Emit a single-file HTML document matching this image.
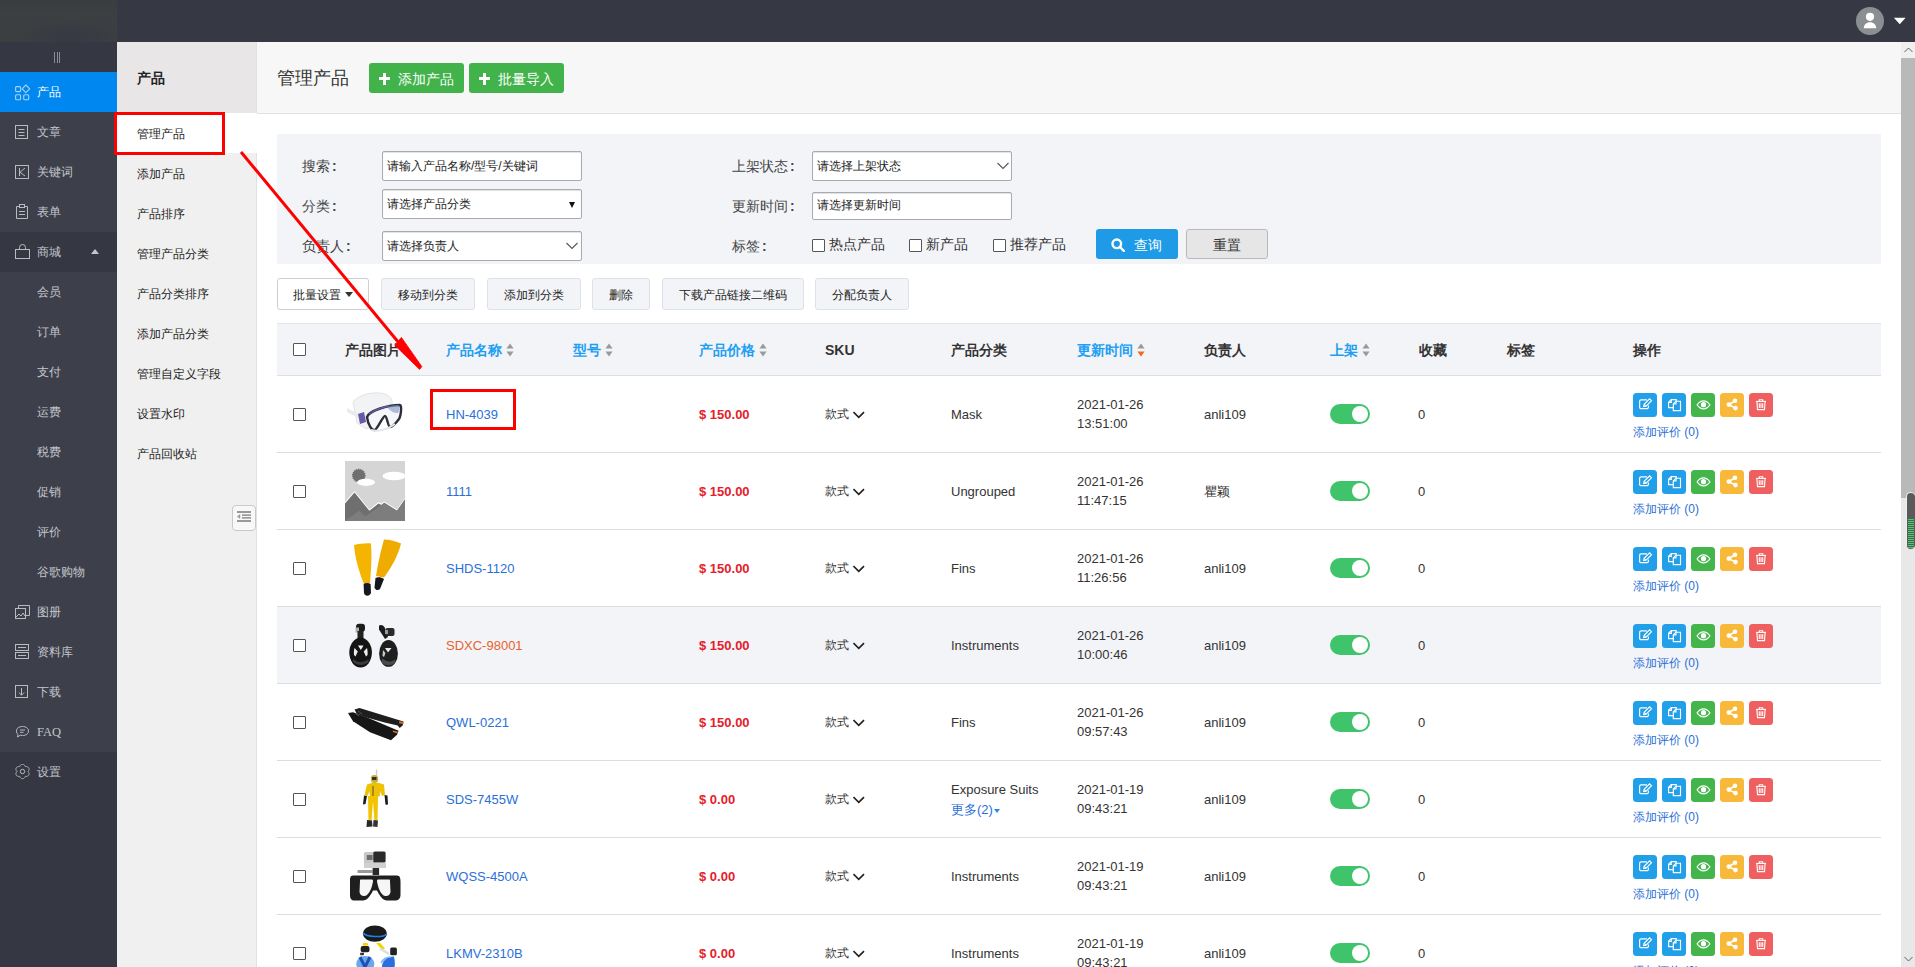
<!DOCTYPE html><html><head><meta charset="utf-8"><style>*{box-sizing:border-box;margin:0;padding:0}
html,body{width:1915px;height:967px;overflow:hidden}
body{position:relative;background:#fff;font-family:"Liberation Sans",sans-serif;font-size:13px;color:#333}
.abs{position:absolute}
#top{left:0;top:0;width:1915px;height:42px;background:#363943}
#logo{left:0;top:0;width:117px;height:42px;background:radial-gradient(ellipse 45px 14px at 68px 36px,#363943 0%,rgba(54,57,67,0.6) 50%,rgba(54,57,67,0) 100%),linear-gradient(180deg,#393d40 0%,#3c4043 40%,#3a3e41 100%)}
#side{left:0;top:42px;width:117px;height:925px;background:#353842}
#menu{left:0;top:112px;width:117px;height:640px;background:#3d404b}
.mi{position:absolute;left:0;width:117px;height:40px;color:#c4c6cc;font-size:12px;line-height:40px}
.mi .t{position:absolute;left:37px;top:0}
.mi svg{position:absolute;left:15px;top:12px}
.mi.act{background:#0088f0;color:#fff}
.mi.dk{background:#353842}
#sub{left:117px;top:42px;width:140px;height:925px;background:#f0f0f0;border-right:1px solid #dfe2e8}
#subh{left:117px;top:42px;width:140px;height:72px;background:#e8e6e6;border-right:1px solid #dfe2e8;border-bottom:1px solid #dfe2e8}
.si{position:absolute;left:137px;font-size:12px;color:#1c1c1c;line-height:40px;height:40px}
#hdr{left:257px;top:42px;width:1644px;height:72px;background:#f7f7f7;border-bottom:1px solid #dde2e8}
.gbtn{position:absolute;top:63px;height:30px;width:95px;background:#42b24a;border-radius:3px;color:#fff;font-size:14px;line-height:30px}
.gbtn .pl{position:absolute;left:9.5px;top:10px;width:11.5px;height:11.5px}
.gbtn .pl:before{content:"";position:absolute;left:0;top:4.25px;width:11.5px;height:3px;background:#fff}
.gbtn .pl:after{content:"";position:absolute;left:4.25px;top:0;width:3px;height:11.5px;background:#fff}
.gbtn .tx{position:absolute;left:29px;top:1px}
#panel{left:277px;top:134px;width:1604px;height:130px;background:#f3f4f8}
.lbl{position:absolute;font-size:14px;color:#454545;line-height:16px}
.inp{position:absolute;background:#fff;border:1px solid #a9a9b3;border-radius:2px;box-shadow:inset 0 1px 1px rgba(0,0,0,.12);font-size:12px;color:#222;line-height:28px;padding-left:4px}
.cb{position:absolute;width:13px;height:13px;border:1px solid #555;background:#fff;border-radius:1px}
.tb{position:absolute;top:278px;height:32px;background:#f3f4f8;border:1px solid #dde2ea;border-radius:3px;font-size:12px;color:#222;line-height:30px;padding-top:1px;text-align:center}
.th{position:absolute;left:277px;top:323px;width:1604px;height:53px;background:#f3f4f8;border-top:1px solid #e2e4e8;border-bottom:1px solid #dcdfe4}
.hc{position:absolute;top:342px;font-size:14px;font-weight:bold;color:#333;line-height:16px;white-space:nowrap}
.hc.bl{color:#1e9ff2}
.row{position:absolute;left:277px;width:1604px;height:77px;border-bottom:1px solid #dcdddf}
.row.hl{background:#f3f4f8}
.c{position:absolute;font-size:13px;line-height:19px;color:#333;white-space:nowrap}
.price{color:#e5202a;font-weight:bold}
.tog{position:absolute;width:40px;height:20px;border-radius:10px;background:#3fc46c}
.tog:after{content:"";position:absolute;right:2px;top:2px;width:16px;height:16px;border-radius:50%;background:#fff}
.ab{position:absolute;width:24px;height:24px;border-radius:3.5px}
.ab svg{position:absolute;left:0;top:0}
.rev{position:absolute;font-size:12px;color:#2b6fd8;line-height:14px;white-space:nowrap}
.col{display:inline-block;margin-left:2px;font-weight:bold}
</style></head><body><div id="top" class="abs"></div><div id="logo" class="abs"></div><div id="side" class="abs"></div><div id="menu" class="abs"></div><div class="abs" style="left:54px;top:52px;width:1px;height:11px;background:#8a8d94"></div><div class="abs" style="left:56.6px;top:52px;width:1px;height:11px;background:#8a8d94"></div><div class="abs" style="left:59.2px;top:52px;width:1px;height:11px;background:#8a8d94"></div><svg class="abs" style="left:1856px;top:7px" width="28" height="28" viewBox="0 0 28 28"><circle cx="14" cy="14" r="14" fill="#8c8f92"/><circle cx="14" cy="9.8" r="4.1" fill="#fff"/><path d="M7.8 21.3c0-3.8 2.8-6 6.2-6s6.2 2.2 6.2 6z" fill="#fff"/></svg><svg class="abs" style="left:1893px;top:17px" width="13" height="8" viewBox="0 0 13 8"><path d="M0.9 0.8h11.7L6.75 7.2z" fill="#fff"/></svg><div class="mi act" style="top:72px"><svg width="16" height="17" viewBox="0 0 16 17" fill="none" stroke="#a9d1f6" stroke-width="1.1"><rect x="0.6" y="2.6" width="5" height="5" rx="1"/><rect x="0.6" y="10.7" width="5" height="5" rx="1"/><rect x="8.7" y="10.7" width="5" height="5" rx="1"/><path d="M10.9 1L14.7 4.8L10.9 8.6L7.1 4.8Z" stroke-linejoin="round"/></svg><span class="t" style="left:37px">产品</span></div><div class="mi " style="top:112px"><svg width="16" height="16" viewBox="0 0 16 16" fill="none" stroke="#b9bbc1" stroke-width="1"><rect x="0.5" y="1.5" width="12" height="13"/><path d="M3.5 5.5h6M3.5 8.5h6M3.5 11.5h6"/></svg><span class="t" style="left:37px">文章</span></div><div class="mi " style="top:152px"><svg width="16" height="16" viewBox="0 0 16 16" fill="none" stroke="#b9bbc1" stroke-width="1"><rect x="0.5" y="1.5" width="13" height="13"/><path d="M4.5 4v8M10 4L5 8.3L10 12"/></svg><span class="t" style="left:37px">关键词</span></div><div class="mi " style="top:192px"><svg width="16" height="16" viewBox="0 0 16 16" fill="none" stroke="#b9bbc1" stroke-width="1"><path d="M4.5 2.5h-3v12h11v-12h-3"/><rect x="4.5" y="0.5" width="5" height="3"/><path d="M4 7.5h6M4 10.5h6"/></svg><span class="t" style="left:37px">表单</span></div><div class="mi dk" style="top:232px"><svg width="16" height="16" viewBox="0 0 16 16" fill="none" stroke="#b9bbc1" stroke-width="1"><rect x="0.5" y="5.5" width="14" height="9"/><path d="M4.5 5.5v-2a3 3 0 0 1 6 0v2"/></svg><span class="t" style="left:37px">商城</span><div class="abs" style="left:91px;top:17px;width:0;height:0;border-left:4.5px solid transparent;border-right:4.5px solid transparent;border-bottom:5px solid #c4c6cc"></div></div><div class="mi " style="top:272px"><span class="t" style="left:37px">会员</span></div><div class="mi " style="top:312px"><span class="t" style="left:37px">订单</span></div><div class="mi " style="top:352px"><span class="t" style="left:37px">支付</span></div><div class="mi " style="top:392px"><span class="t" style="left:37px">运费</span></div><div class="mi " style="top:432px"><span class="t" style="left:37px">税费</span></div><div class="mi " style="top:472px"><span class="t" style="left:37px">促销</span></div><div class="mi " style="top:512px"><span class="t" style="left:37px">评价</span></div><div class="mi " style="top:552px"><span class="t" style="left:37px">谷歌购物</span></div><div class="mi " style="top:592px"><svg width="16" height="16" viewBox="0 0 16 16" fill="none" stroke="#b9bbc1" stroke-width="1"><rect x="0.5" y="4.5" width="10" height="10"/><path d="M3.5 4.5v-3h11v10h-4"/><path d="M1 13l3-3 2 2 2-3 2 3"/></svg><span class="t" style="left:37px">图册</span></div><div class="mi " style="top:632px"><svg width="16" height="16" viewBox="0 0 16 16" fill="none" stroke="#b9bbc1" stroke-width="1"><rect x="0.5" y="0.5" width="13" height="6"/><rect x="0.5" y="8.5" width="13" height="6"/><path d="M3 3.5h8M3 11.5h8"/></svg><span class="t" style="left:37px">资料库</span></div><div class="mi " style="top:672px"><svg width="16" height="16" viewBox="0 0 16 16" fill="none" stroke="#b9bbc1" stroke-width="1"><rect x="0.5" y="1.5" width="12" height="12"/><path d="M6.5 4v7M3.8 8.5l2.7 2.7 2.7-2.7"/></svg><span class="t" style="left:37px">下载</span></div><div class="mi " style="top:712px"><svg width="16" height="16" viewBox="0 0 16 16" fill="none" stroke="#b9bbc1" stroke-width="1"><path d="M7.5 2.5c3.6 0 6 1.9 6 4.5s-2.4 4.5-6 4.5c-.8 0-1.5-.1-2.2-.3L2.5 13l.6-2.6C1.8 9.6 1.5 8.3 1.5 7c0-2.6 2.4-4.5 6-4.5z"/><path d="M5 6h5M5 8.3h3.5"/></svg><span class="t" style="left:37px;font-family:Liberation Serif;font-size:12.5px">FAQ</span></div><div class="mi dk" style="top:752px"><svg width="16" height="16" viewBox="0 0 16 16" fill="none" stroke="#b9bbc1" stroke-width="1"><path d="M7.50 0.30 L7.81 0.32 L8.12 0.38 L8.42 0.48 L8.71 0.62 L8.99 0.79 L9.24 1.00 L9.48 1.23 L9.69 1.49 L9.88 1.76 L10.04 2.05 L10.18 2.35 L10.30 2.65 L10.62 2.60 L10.95 2.57 L11.28 2.57 L11.61 2.60 L11.94 2.65 L12.26 2.74 L12.56 2.86 L12.85 3.01 L13.12 3.19 L13.35 3.40 L13.56 3.64 L13.74 3.90 L13.87 4.18 L13.98 4.48 L14.04 4.79 L14.06 5.11 L14.05 5.43 L14.00 5.76 L13.92 6.08 L13.80 6.39 L13.66 6.69 L13.49 6.98 L13.30 7.25 L13.10 7.50 L13.30 7.75 L13.49 8.02 L13.66 8.31 L13.80 8.61 L13.92 8.92 L14.00 9.24 L14.05 9.57 L14.06 9.89 L14.04 10.21 L13.98 10.52 L13.87 10.82 L13.74 11.10 L13.56 11.36 L13.35 11.60 L13.12 11.81 L12.85 11.99 L12.56 12.14 L12.26 12.26 L11.94 12.35 L11.61 12.40 L11.28 12.43 L10.95 12.43 L10.62 12.40 L10.30 12.35 L10.18 12.65 L10.04 12.95 L9.88 13.24 L9.69 13.51 L9.48 13.77 L9.24 14.00 L8.99 14.21 L8.71 14.38 L8.42 14.52 L8.12 14.62 L7.81 14.68 L7.50 14.70 L7.19 14.68 L6.88 14.62 L6.58 14.52 L6.29 14.38 L6.01 14.21 L5.76 14.00 L5.52 13.77 L5.31 13.51 L5.12 13.24 L4.96 12.95 L4.82 12.65 L4.70 12.35 L4.38 12.40 L4.05 12.43 L3.72 12.43 L3.39 12.40 L3.06 12.35 L2.74 12.26 L2.44 12.14 L2.15 11.99 L1.88 11.81 L1.65 11.60 L1.44 11.36 L1.26 11.10 L1.13 10.82 L1.02 10.52 L0.96 10.21 L0.94 9.89 L0.95 9.57 L1.00 9.24 L1.08 8.92 L1.20 8.61 L1.34 8.31 L1.51 8.02 L1.70 7.75 L1.90 7.50 L1.70 7.25 L1.51 6.98 L1.34 6.69 L1.20 6.39 L1.08 6.08 L1.00 5.76 L0.95 5.43 L0.94 5.11 L0.96 4.79 L1.02 4.48 L1.13 4.18 L1.26 3.90 L1.44 3.64 L1.65 3.40 L1.88 3.19 L2.15 3.01 L2.44 2.86 L2.74 2.74 L3.06 2.65 L3.39 2.60 L3.72 2.57 L4.05 2.57 L4.38 2.60 L4.70 2.65 L4.82 2.35 L4.96 2.05 L5.12 1.76 L5.31 1.49 L5.52 1.23 L5.76 1.00 L6.01 0.79 L6.29 0.62 L6.58 0.48 L6.88 0.38 L7.19 0.32Z"/><circle cx="7.5" cy="7.5" r="2.2"/></svg><span class="t" style="left:37px">设置</span></div><div id="sub" class="abs"></div><div id="subh" class="abs"></div><div class="abs" style="left:137px;top:70px;font-size:14px;font-weight:bold;color:#222;line-height:16px">产品</div><div class="abs" style="left:117px;top:113px;width:141px;height:40px;background:#fff"></div><div class="si" style="top:114px">管理产品</div><div class="si" style="top:154px">添加产品</div><div class="si" style="top:194px">产品排序</div><div class="si" style="top:234px">管理产品分类</div><div class="si" style="top:274px">产品分类排序</div><div class="si" style="top:314px">添加产品分类</div><div class="si" style="top:354px">管理自定义字段</div><div class="si" style="top:394px">设置水印</div><div class="si" style="top:434px">产品回收站</div><div class="abs" style="left:232px;top:505px;width:24px;height:26px;background:#f8f8f8;border:1px solid #c9c9c9;border-radius:4px"></div><svg class="abs" style="left:232px;top:505px" width="24" height="26" viewBox="0 0 24 26"><rect x="5" y="6" width="14" height="2" fill="#9a9a9a"/><rect x="10" y="9.3" width="9" height="1.7" fill="#9a9a9a"/><rect x="10" y="12" width="9" height="1.7" fill="#9a9a9a"/><rect x="5" y="15" width="14" height="2" fill="#9a9a9a"/><path d="M8.2 9v5L5 11.5z" fill="#9a9a9a"/></svg><div id="hdr" class="abs"></div><div class="abs" style="left:277px;top:67px;font-size:18px;color:#333;line-height:22px">管理产品</div><div class="gbtn" style="left:369px"><span class="pl"></span><span class="tx">添加产品</span></div><div class="gbtn" style="left:469px"><span class="pl"></span><span class="tx">批量导入</span></div><div id="panel" class="abs"></div><div class="lbl" style="left:302px;top:158px">搜索<span class="col">:</span></div><div class="lbl" style="left:302px;top:198px">分类<span class="col">:</span></div><div class="lbl" style="left:302px;top:238px">负责人<span class="col">:</span></div><div class="inp" style="left:382px;top:151px;width:200px;height:30px">请输入产品名称/型号/关键词</div><div class="inp" style="left:382px;top:189px;width:200px;height:30px">请选择产品分类<div class="abs" style="left:186px;top:12px;width:0;height:0;border-left:3.5px solid transparent;border-right:3.5px solid transparent;border-top:6px solid #111"></div></div><div class="inp" style="left:382px;top:231px;width:200px;height:30px">请选择负责人<svg class="abs" style="left:183px;top:10px" width="12" height="8" viewBox="0 0 12 8" fill="none" stroke="#555" stroke-width="1.1"><path d="M0.5 1l5.5 5.5L11.5 1"/></svg></div><div class="lbl" style="left:732px;top:158px">上架状态<span class="col">:</span></div><div class="lbl" style="left:732px;top:198px">更新时间<span class="col">:</span></div><div class="lbl" style="left:732px;top:238px">标签<span class="col">:</span></div><div class="inp" style="left:812px;top:151px;width:200px;height:30px">请选择上架状态<svg class="abs" style="left:184px;top:10px" width="12" height="8" viewBox="0 0 12 8" fill="none" stroke="#555" stroke-width="1.1"><path d="M0.5 1l5.5 5.5L11.5 1"/></svg></div><div class="inp" style="left:812px;top:192px;width:200px;height:28px;line-height:25px">请选择更新时间</div><div class="cb" style="left:812px;top:239px"></div><div class="lbl" style="left:829px;top:236px;color:#333;font-size:14px">热点产品</div><div class="cb" style="left:909px;top:239px"></div><div class="lbl" style="left:926px;top:236px;color:#333;font-size:14px">新产品</div><div class="cb" style="left:993px;top:239px"></div><div class="lbl" style="left:1010px;top:236px;color:#333;font-size:14px">推荐产品</div><div class="abs" style="left:1096px;top:229px;width:82px;height:30px;background:#1f9ae6;border-radius:3px;color:#fff;font-size:14px;line-height:30px"><svg class="abs" style="left:15px;top:9px" width="14" height="14" viewBox="0 0 14 14" fill="none" stroke="#fff" stroke-width="2.4"><circle cx="5.8" cy="5.8" r="4.3"/><path d="M9 9l3.8 3.8" stroke-linecap="round"/></svg><span class="abs" style="left:38px;top:1px">查询</span></div><div class="abs" style="left:1186px;top:229px;width:82px;height:30px;background:#e6e6e6;border:1px solid #b9b9b9;border-radius:3px;color:#333;font-size:14px;line-height:30px;text-align:center">重置</div><div class="tb" style="left:277px;width:92px;background:#fff;border-color:#cfcfcf">批量设置 <span style="display:inline-block;width:0;height:0;border-left:4px solid transparent;border-right:4px solid transparent;border-top:5px solid #333;vertical-align:2px"></span></div><div class="tb" style="left:381px;width:94px">移动到分类</div><div class="tb" style="left:487px;width:94px">添加到分类</div><div class="tb" style="left:592px;width:58px">删除</div><div class="tb" style="left:662px;width:142px">下载产品链接二维码</div><div class="tb" style="left:815px;width:94px">分配负责人</div><div class="th"></div><div class="cb" style="left:293px;top:343px"></div><div class="hc" style="left:345px">产品图片</div><div class="hc bl" style="left:446px">产品名称<svg style="display:inline-block;vertical-align:-2px;margin-left:4px" width="8" height="14" viewBox="0 0 8 14"><path d="M4 0.6L7.6 5.4H0.4z" fill="#9a9a9a"/><path d="M4 13.4L7.6 8.6H0.4z" fill="#9a9a9a"/></svg></div><div class="hc bl" style="left:573px">型号<svg style="display:inline-block;vertical-align:-2px;margin-left:4px" width="8" height="14" viewBox="0 0 8 14"><path d="M4 0.6L7.6 5.4H0.4z" fill="#9a9a9a"/><path d="M4 13.4L7.6 8.6H0.4z" fill="#9a9a9a"/></svg></div><div class="hc bl" style="left:699px">产品价格<svg style="display:inline-block;vertical-align:-2px;margin-left:4px" width="8" height="14" viewBox="0 0 8 14"><path d="M4 0.6L7.6 5.4H0.4z" fill="#9a9a9a"/><path d="M4 13.4L7.6 8.6H0.4z" fill="#9a9a9a"/></svg></div><div class="hc" style="left:825px">SKU</div><div class="hc" style="left:951px">产品分类</div><div class="hc bl" style="left:1077px">更新时间<svg style="display:inline-block;vertical-align:-2px;margin-left:4px" width="8" height="14" viewBox="0 0 8 14"><path d="M4 0.6L7.6 5.4H0.4z" fill="#9a9a9a"/><path d="M4 13.4L7.6 8.6H0.4z" fill="#f06a1c"/></svg></div><div class="hc" style="left:1204px">负责人</div><div class="hc bl" style="left:1330px">上架<svg style="display:inline-block;vertical-align:-2px;margin-left:4px" width="8" height="14" viewBox="0 0 8 14"><path d="M4 0.6L7.6 5.4H0.4z" fill="#9a9a9a"/><path d="M4 13.4L7.6 8.6H0.4z" fill="#9a9a9a"/></svg></div><div class="hc" style="left:1419px">收藏</div><div class="hc" style="left:1507px">标签</div><div class="hc" style="left:1633px">操作</div><div class="row" style="top:376px"></div><div class="cb" style="left:293px;top:408px"></div><div class="abs" style="left:345px;top:384px;width:60px;height:60px"><svg width="60" height="60" viewBox="0 0 60 60"><path d="M8 18c6-8 22-11 32-8 6 2 8 7 7 11l-16 20-10 4-9-6z" fill="#f1f3f5" stroke="#e2e5e8" stroke-width="1"/><path d="M2 24l12 6-1 4-11-6z" fill="#e9ecef"/><path d="M13 30l6-2 2 10-6 2z" fill="#6a58aa"/><path d="M22 33c2-6 20-12 33-12 2 0 1 11-1 14-3 4-6 8-9 8-2 0-3-11-5-11s-7 12-10 14c-3 1-7-5-8-13z" fill="#f4f6fa" stroke="#2c2f3a" stroke-width="2.4" stroke-linejoin="round"/><path d="M42 23c5-2 10-2 12-2 1 3 0 7-1 8-4 0-7-1-11-6z" fill="#7d93c7" opacity=".6"/><path d="M24 30c6-4 14-7 20-8" stroke="#6a58aa" stroke-width="1.5" fill="none"/><path d="M26 46c6 2 16 0 24-6" stroke="#e4e7ea" stroke-width="2" fill="none"/></svg></div><div class="c" style="left:446px;top:405px;color:#2b6fd8">HN-4039</div><div class="c price" style="left:699px;top:405px">$ 150.00</div><div class="c" style="left:825px;top:405px;font-size:12px">款式</div><svg class="abs" style="left:853px;top:411px" width="11.5" height="8" viewBox="0 0 12 8" fill="none" stroke="#222" stroke-width="1.7"><path d="M0.5 1l5.5 5.5L11.5 1"/></svg><div class="c" style="left:951px;top:405px">Mask</div><div class="c" style="left:1077px;top:395px">2021-01-26<br>13:51:00</div><div class="c" style="left:1204px;top:405px">anli109</div><div class="tog" style="left:1330px;top:404px"></div><div class="c" style="left:1418px;top:405px">0</div><div class="ab" style="left:1633px;top:393px;background:#219fe9"><svg width="24" height="24" viewBox="0 0 24 24" fill="none" stroke="#fff" stroke-width="1.2"><path d="M14 6.9H8.1a1.5 1.5 0 0 0-1.5 1.5v5.8a1.5 1.5 0 0 0 1.5 1.5h5.8a1.5 1.5 0 0 0 1.5-1.5v-1.6"/><path d="M10.6 13.6l.5-2.3 5.5-5.5 1.9 1.9-5.5 5.5z" stroke-width="1.1"/><path d="M11.2 11.4l1.9 1.9"/></svg></div><div class="ab" style="left:1662px;top:393px;background:#219fe9"><svg width="24" height="24" viewBox="0 0 24 24" fill="none" stroke="#fff" stroke-width="1.15"><path d="M11.3 14.6H6.6V9.3L9.3 6.6h4.9v2"/><path d="M9.3 6.6v2.7H6.6"/><path d="M11.3 10.9L14 8.2h4.5v9.4h-7.2z"/><path d="M14 8.2v2.7h-2.7"/></svg></div><div class="ab" style="left:1691px;top:393px;background:#43b54b"><svg width="24" height="24" viewBox="0 0 24 24"><path d="M6.1 11.9c1.8-2.6 4-4 6.4-4s4.6 1.4 6.4 4c-1.8 2.6-4 4-6.4 4s-4.6-1.4-6.4-4z" fill="none" stroke="#fff" stroke-width="1.1"/><circle cx="12.5" cy="11.7" r="2.6" fill="#fff"/></svg></div><div class="ab" style="left:1720px;top:393px;background:#f8b93b"><svg width="24" height="24" viewBox="0 0 24 24"><path d="M15 7.8L8.9 11.6l6.6 3.5" stroke="#fff" stroke-width="1.6" fill="none"/><circle cx="15" cy="7.8" r="2.3" fill="#fff"/><circle cx="15.5" cy="15.1" r="2.3" fill="#fff"/><circle cx="8.9" cy="11.6" r="2.4" fill="#fff"/></svg></div><div class="ab" style="left:1749px;top:393px;background:#ef5f5f"><svg width="24" height="24" viewBox="0 0 24 24" fill="none" stroke="#fff" stroke-width="1.1"><path d="M7.1 8.4h9.9"/><path d="M10.3 8.2V6.8h3.4v1.4"/><path d="M7.9 8.6l.6 8h7l.6-8"/><path d="M10.3 10.3v4.6M12 10.3v4.6M13.7 10.3v4.6"/></svg></div><div class="rev" style="left:1633px;top:425px">添加评价 (0)</div><div class="row" style="top:453px"></div><div class="cb" style="left:293px;top:485px"></div><div class="abs" style="left:345px;top:461px;width:60px;height:60px"><svg width="60" height="60" viewBox="0 0 60 60"><rect width="60" height="60" fill="#d5d5d5"/><path d="M0 41L9.5 30 24.4 48.4 33.5 41 36.4 42.5 39.3 40.4 52 48.4 60 36.7V60H0z" fill="#ffffff"/><path d="M0 42.5L9.5 31.5 24.4 49.8 33.5 42.5 36.4 44 39.3 41.8 52 49.8 60 38.2V60H0z" fill="#6f6f6f"/><path d="M0 60L14.2 49.5 20.4 55.6 39.3 41.8 52 49.8 60 38.2V60z" fill="#7d7d7d"/><circle cx="13.8" cy="14.5" r="6.3" fill="#6f6f6f" stroke="#6f6f6f" stroke-width="1.2" stroke-dasharray="1 1"/><ellipse cx="21" cy="21.3" rx="9" ry="3.6" fill="#fff"/><ellipse cx="49" cy="15" rx="11.5" ry="4.3" fill="#fff"/></svg></div><div class="c" style="left:446px;top:482px;color:#2b6fd8">1111</div><div class="c price" style="left:699px;top:482px">$ 150.00</div><div class="c" style="left:825px;top:482px;font-size:12px">款式</div><svg class="abs" style="left:853px;top:488px" width="11.5" height="8" viewBox="0 0 12 8" fill="none" stroke="#222" stroke-width="1.7"><path d="M0.5 1l5.5 5.5L11.5 1"/></svg><div class="c" style="left:951px;top:482px">Ungrouped</div><div class="c" style="left:1077px;top:472px">2021-01-26<br>11:47:15</div><div class="c" style="left:1204px;top:482px">瞿颖</div><div class="tog" style="left:1330px;top:481px"></div><div class="c" style="left:1418px;top:482px">0</div><div class="ab" style="left:1633px;top:470px;background:#219fe9"><svg width="24" height="24" viewBox="0 0 24 24" fill="none" stroke="#fff" stroke-width="1.2"><path d="M14 6.9H8.1a1.5 1.5 0 0 0-1.5 1.5v5.8a1.5 1.5 0 0 0 1.5 1.5h5.8a1.5 1.5 0 0 0 1.5-1.5v-1.6"/><path d="M10.6 13.6l.5-2.3 5.5-5.5 1.9 1.9-5.5 5.5z" stroke-width="1.1"/><path d="M11.2 11.4l1.9 1.9"/></svg></div><div class="ab" style="left:1662px;top:470px;background:#219fe9"><svg width="24" height="24" viewBox="0 0 24 24" fill="none" stroke="#fff" stroke-width="1.15"><path d="M11.3 14.6H6.6V9.3L9.3 6.6h4.9v2"/><path d="M9.3 6.6v2.7H6.6"/><path d="M11.3 10.9L14 8.2h4.5v9.4h-7.2z"/><path d="M14 8.2v2.7h-2.7"/></svg></div><div class="ab" style="left:1691px;top:470px;background:#43b54b"><svg width="24" height="24" viewBox="0 0 24 24"><path d="M6.1 11.9c1.8-2.6 4-4 6.4-4s4.6 1.4 6.4 4c-1.8 2.6-4 4-6.4 4s-4.6-1.4-6.4-4z" fill="none" stroke="#fff" stroke-width="1.1"/><circle cx="12.5" cy="11.7" r="2.6" fill="#fff"/></svg></div><div class="ab" style="left:1720px;top:470px;background:#f8b93b"><svg width="24" height="24" viewBox="0 0 24 24"><path d="M15 7.8L8.9 11.6l6.6 3.5" stroke="#fff" stroke-width="1.6" fill="none"/><circle cx="15" cy="7.8" r="2.3" fill="#fff"/><circle cx="15.5" cy="15.1" r="2.3" fill="#fff"/><circle cx="8.9" cy="11.6" r="2.4" fill="#fff"/></svg></div><div class="ab" style="left:1749px;top:470px;background:#ef5f5f"><svg width="24" height="24" viewBox="0 0 24 24" fill="none" stroke="#fff" stroke-width="1.1"><path d="M7.1 8.4h9.9"/><path d="M10.3 8.2V6.8h3.4v1.4"/><path d="M7.9 8.6l.6 8h7l.6-8"/><path d="M10.3 10.3v4.6M12 10.3v4.6M13.7 10.3v4.6"/></svg></div><div class="rev" style="left:1633px;top:502px">添加评价 (0)</div><div class="row" style="top:530px"></div><div class="cb" style="left:293px;top:562px"></div><div class="abs" style="left:345px;top:538px;width:60px;height:60px"><svg width="60" height="60" viewBox="0 0 60 60"><path d="M9 7c5-1 11-2 17-1.5 1 12 0 28-1 39.5l-6 1C14 34 10 20 9 7z" fill="#f5b400"/><path d="M39 1.5c6 0 12 2 17 4C53 18 46 30 39 39.5l-8-1.5C33 25 36 12 39 1.5z" fill="#f0ab00"/><path d="M18.6 46c2-1.5 5-1.5 7 0l.4 9c-1 3-6 4-7 0z" fill="#15181e"/><path d="M30.5 40c2-1.5 6-1 8.5 1l-4 10c-2 2-5 1-5.5-1.5z" fill="#15181e"/></svg></div><div class="c" style="left:446px;top:559px;color:#2b6fd8">SHDS-1120</div><div class="c price" style="left:699px;top:559px">$ 150.00</div><div class="c" style="left:825px;top:559px;font-size:12px">款式</div><svg class="abs" style="left:853px;top:565px" width="11.5" height="8" viewBox="0 0 12 8" fill="none" stroke="#222" stroke-width="1.7"><path d="M0.5 1l5.5 5.5L11.5 1"/></svg><div class="c" style="left:951px;top:559px">Fins</div><div class="c" style="left:1077px;top:549px">2021-01-26<br>11:26:56</div><div class="c" style="left:1204px;top:559px">anli109</div><div class="tog" style="left:1330px;top:558px"></div><div class="c" style="left:1418px;top:559px">0</div><div class="ab" style="left:1633px;top:547px;background:#219fe9"><svg width="24" height="24" viewBox="0 0 24 24" fill="none" stroke="#fff" stroke-width="1.2"><path d="M14 6.9H8.1a1.5 1.5 0 0 0-1.5 1.5v5.8a1.5 1.5 0 0 0 1.5 1.5h5.8a1.5 1.5 0 0 0 1.5-1.5v-1.6"/><path d="M10.6 13.6l.5-2.3 5.5-5.5 1.9 1.9-5.5 5.5z" stroke-width="1.1"/><path d="M11.2 11.4l1.9 1.9"/></svg></div><div class="ab" style="left:1662px;top:547px;background:#219fe9"><svg width="24" height="24" viewBox="0 0 24 24" fill="none" stroke="#fff" stroke-width="1.15"><path d="M11.3 14.6H6.6V9.3L9.3 6.6h4.9v2"/><path d="M9.3 6.6v2.7H6.6"/><path d="M11.3 10.9L14 8.2h4.5v9.4h-7.2z"/><path d="M14 8.2v2.7h-2.7"/></svg></div><div class="ab" style="left:1691px;top:547px;background:#43b54b"><svg width="24" height="24" viewBox="0 0 24 24"><path d="M6.1 11.9c1.8-2.6 4-4 6.4-4s4.6 1.4 6.4 4c-1.8 2.6-4 4-6.4 4s-4.6-1.4-6.4-4z" fill="none" stroke="#fff" stroke-width="1.1"/><circle cx="12.5" cy="11.7" r="2.6" fill="#fff"/></svg></div><div class="ab" style="left:1720px;top:547px;background:#f8b93b"><svg width="24" height="24" viewBox="0 0 24 24"><path d="M15 7.8L8.9 11.6l6.6 3.5" stroke="#fff" stroke-width="1.6" fill="none"/><circle cx="15" cy="7.8" r="2.3" fill="#fff"/><circle cx="15.5" cy="15.1" r="2.3" fill="#fff"/><circle cx="8.9" cy="11.6" r="2.4" fill="#fff"/></svg></div><div class="ab" style="left:1749px;top:547px;background:#ef5f5f"><svg width="24" height="24" viewBox="0 0 24 24" fill="none" stroke="#fff" stroke-width="1.1"><path d="M7.1 8.4h9.9"/><path d="M10.3 8.2V6.8h3.4v1.4"/><path d="M7.9 8.6l.6 8h7l.6-8"/><path d="M10.3 10.3v4.6M12 10.3v4.6M13.7 10.3v4.6"/></svg></div><div class="rev" style="left:1633px;top:579px">添加评价 (0)</div><div class="row hl" style="top:607px"></div><div class="cb" style="left:293px;top:639px"></div><div class="abs" style="left:345px;top:615px;width:60px;height:60px"><svg width="60" height="60" viewBox="0 0 60 60"><rect x="11" y="8.7" width="9" height="8" rx="3" fill="#1c1c1c"/><rect x="10.5" y="12.5" width="3.5" height="5" fill="#b0b0a8"/><rect x="12.5" y="16" width="6" height="8" fill="#222"/><ellipse cx="15.6" cy="37.6" rx="11.3" ry="14.9" fill="#141414"/><path d="M13 30.5h5.5l-2.7 4.5z" fill="#f4f4f4"/><path d="M9.5 33l3.3 3.5-2.3 5-1.5-1.5c-.3-2.5 0-5 .5-7z" fill="#eee"/><path d="M22 33l-3.3 3.5 2.3 5 1.5-1.5c.3-2.5 0-5-.5-7z" fill="#eee"/><path d="M8 44c4 4 11 4 15.5 0v3c-4 4-11 4-15.5 0z" fill="#3a3a3a"/><path d="M34 10.5c3-1.5 5 .5 6 2.5l3 9-3 2-6-9.5z" fill="#1a1a1a"/><rect x="40.5" y="13" width="9" height="8" rx="2" fill="#2a2a2a"/><rect x="40" y="15" width="3" height="4" fill="#999"/><ellipse cx="43.5" cy="38.4" rx="9.4" ry="13.4" fill="#1e1e1e"/><path d="M40 33l3 4.5 3.5-4.5z" fill="#e8e8e8"/><path d="M38 35l2.5 3-1.5 4-1.5-1z" fill="#ccc"/><path d="M37 43c3 4 10 5 13 1v4c-3 3-10 3-13 0z" fill="#4a4a4a"/></svg></div><div class="c" style="left:446px;top:636px;color:#e8632f">SDXC-98001</div><div class="c price" style="left:699px;top:636px">$ 150.00</div><div class="c" style="left:825px;top:636px;font-size:12px">款式</div><svg class="abs" style="left:853px;top:642px" width="11.5" height="8" viewBox="0 0 12 8" fill="none" stroke="#222" stroke-width="1.7"><path d="M0.5 1l5.5 5.5L11.5 1"/></svg><div class="c" style="left:951px;top:636px">Instruments</div><div class="c" style="left:1077px;top:626px">2021-01-26<br>10:00:46</div><div class="c" style="left:1204px;top:636px">anli109</div><div class="tog" style="left:1330px;top:635px"></div><div class="c" style="left:1418px;top:636px">0</div><div class="ab" style="left:1633px;top:624px;background:#219fe9"><svg width="24" height="24" viewBox="0 0 24 24" fill="none" stroke="#fff" stroke-width="1.2"><path d="M14 6.9H8.1a1.5 1.5 0 0 0-1.5 1.5v5.8a1.5 1.5 0 0 0 1.5 1.5h5.8a1.5 1.5 0 0 0 1.5-1.5v-1.6"/><path d="M10.6 13.6l.5-2.3 5.5-5.5 1.9 1.9-5.5 5.5z" stroke-width="1.1"/><path d="M11.2 11.4l1.9 1.9"/></svg></div><div class="ab" style="left:1662px;top:624px;background:#219fe9"><svg width="24" height="24" viewBox="0 0 24 24" fill="none" stroke="#fff" stroke-width="1.15"><path d="M11.3 14.6H6.6V9.3L9.3 6.6h4.9v2"/><path d="M9.3 6.6v2.7H6.6"/><path d="M11.3 10.9L14 8.2h4.5v9.4h-7.2z"/><path d="M14 8.2v2.7h-2.7"/></svg></div><div class="ab" style="left:1691px;top:624px;background:#43b54b"><svg width="24" height="24" viewBox="0 0 24 24"><path d="M6.1 11.9c1.8-2.6 4-4 6.4-4s4.6 1.4 6.4 4c-1.8 2.6-4 4-6.4 4s-4.6-1.4-6.4-4z" fill="none" stroke="#fff" stroke-width="1.1"/><circle cx="12.5" cy="11.7" r="2.6" fill="#fff"/></svg></div><div class="ab" style="left:1720px;top:624px;background:#f8b93b"><svg width="24" height="24" viewBox="0 0 24 24"><path d="M15 7.8L8.9 11.6l6.6 3.5" stroke="#fff" stroke-width="1.6" fill="none"/><circle cx="15" cy="7.8" r="2.3" fill="#fff"/><circle cx="15.5" cy="15.1" r="2.3" fill="#fff"/><circle cx="8.9" cy="11.6" r="2.4" fill="#fff"/></svg></div><div class="ab" style="left:1749px;top:624px;background:#ef5f5f"><svg width="24" height="24" viewBox="0 0 24 24" fill="none" stroke="#fff" stroke-width="1.1"><path d="M7.1 8.4h9.9"/><path d="M10.3 8.2V6.8h3.4v1.4"/><path d="M7.9 8.6l.6 8h7l.6-8"/><path d="M10.3 10.3v4.6M12 10.3v4.6M13.7 10.3v4.6"/></svg></div><div class="rev" style="left:1633px;top:656px">添加评价 (0)</div><div class="row" style="top:684px"></div><div class="cb" style="left:293px;top:716px"></div><div class="abs" style="left:345px;top:692px;width:60px;height:60px"><svg width="60" height="60" viewBox="0 0 60 60"><path d="M9.5 17.5l5-1.5 44 13.5-.8 4-3 2.5-2-2.5-13-3-18-5-10-4z" fill="#1e1e1e"/><path d="M3 21l5-.8 10 3.5 35.5 15-1.5 4-6 5.5-21-8-17-11z" fill="#161616"/><path d="M54.4 29l4.3 1.2-.4 1.8-4.3-.8z" fill="#d9692a"/><path d="M47.9 38.4l5.1 1.4-.6 1.8-4.5-1.5z" fill="#d9692a"/><path d="M10 21l4 3M13 19l4 3" stroke="#555" stroke-width="1"/></svg></div><div class="c" style="left:446px;top:713px;color:#2b6fd8">QWL-0221</div><div class="c price" style="left:699px;top:713px">$ 150.00</div><div class="c" style="left:825px;top:713px;font-size:12px">款式</div><svg class="abs" style="left:853px;top:719px" width="11.5" height="8" viewBox="0 0 12 8" fill="none" stroke="#222" stroke-width="1.7"><path d="M0.5 1l5.5 5.5L11.5 1"/></svg><div class="c" style="left:951px;top:713px">Fins</div><div class="c" style="left:1077px;top:703px">2021-01-26<br>09:57:43</div><div class="c" style="left:1204px;top:713px">anli109</div><div class="tog" style="left:1330px;top:712px"></div><div class="c" style="left:1418px;top:713px">0</div><div class="ab" style="left:1633px;top:701px;background:#219fe9"><svg width="24" height="24" viewBox="0 0 24 24" fill="none" stroke="#fff" stroke-width="1.2"><path d="M14 6.9H8.1a1.5 1.5 0 0 0-1.5 1.5v5.8a1.5 1.5 0 0 0 1.5 1.5h5.8a1.5 1.5 0 0 0 1.5-1.5v-1.6"/><path d="M10.6 13.6l.5-2.3 5.5-5.5 1.9 1.9-5.5 5.5z" stroke-width="1.1"/><path d="M11.2 11.4l1.9 1.9"/></svg></div><div class="ab" style="left:1662px;top:701px;background:#219fe9"><svg width="24" height="24" viewBox="0 0 24 24" fill="none" stroke="#fff" stroke-width="1.15"><path d="M11.3 14.6H6.6V9.3L9.3 6.6h4.9v2"/><path d="M9.3 6.6v2.7H6.6"/><path d="M11.3 10.9L14 8.2h4.5v9.4h-7.2z"/><path d="M14 8.2v2.7h-2.7"/></svg></div><div class="ab" style="left:1691px;top:701px;background:#43b54b"><svg width="24" height="24" viewBox="0 0 24 24"><path d="M6.1 11.9c1.8-2.6 4-4 6.4-4s4.6 1.4 6.4 4c-1.8 2.6-4 4-6.4 4s-4.6-1.4-6.4-4z" fill="none" stroke="#fff" stroke-width="1.1"/><circle cx="12.5" cy="11.7" r="2.6" fill="#fff"/></svg></div><div class="ab" style="left:1720px;top:701px;background:#f8b93b"><svg width="24" height="24" viewBox="0 0 24 24"><path d="M15 7.8L8.9 11.6l6.6 3.5" stroke="#fff" stroke-width="1.6" fill="none"/><circle cx="15" cy="7.8" r="2.3" fill="#fff"/><circle cx="15.5" cy="15.1" r="2.3" fill="#fff"/><circle cx="8.9" cy="11.6" r="2.4" fill="#fff"/></svg></div><div class="ab" style="left:1749px;top:701px;background:#ef5f5f"><svg width="24" height="24" viewBox="0 0 24 24" fill="none" stroke="#fff" stroke-width="1.1"><path d="M7.1 8.4h9.9"/><path d="M10.3 8.2V6.8h3.4v1.4"/><path d="M7.9 8.6l.6 8h7l.6-8"/><path d="M10.3 10.3v4.6M12 10.3v4.6M13.7 10.3v4.6"/></svg></div><div class="rev" style="left:1633px;top:733px">添加评价 (0)</div><div class="row" style="top:761px"></div><div class="cb" style="left:293px;top:793px"></div><div class="abs" style="left:345px;top:769px;width:60px;height:60px"><svg width="60" height="60" viewBox="0 0 60 60"><path d="M31.5.5v6" stroke="#ccc" stroke-width="1.4"/><rect x="26" y="6" width="7" height="8" rx="3" fill="#c9b23a"/><rect x="27" y="8" width="4.5" height="3" fill="#333"/><path d="M27 14h7l2 2-1 11h-10l-1-11z" fill="#cfd2d6"/><path d="M22 15.5l5-1.5 7 0 5 1.5 1 10.5-3 1-2-5-.5 5.5h-9.5l-.5-5.5-2 5-3-1z" fill="#f0c100"/><path d="M19 26.5l3 .5-1.5 8-2.5.5z" fill="#1a1a1a"/><path d="M39.5 26l3 .5 .5 9-2.5.3z" fill="#1a1a1a"/><path d="M23 27h10l-.5 24.5h-3l-1.5-19-1.5 19h-3z" fill="#f2c300"/><path d="M28 17v10" stroke="#555" stroke-width="1"/><path d="M22 51l5 .5.5 6-6 .5z" fill="#2a2a2a"/><path d="M28.5 51l4.5.5-.5 6.5-4.5-.5z" fill="#333"/></svg></div><div class="c" style="left:446px;top:790px;color:#2b6fd8">SDS-7455W</div><div class="c price" style="left:699px;top:790px">$ 0.00</div><div class="c" style="left:825px;top:790px;font-size:12px">款式</div><svg class="abs" style="left:853px;top:796px" width="11.5" height="8" viewBox="0 0 12 8" fill="none" stroke="#222" stroke-width="1.7"><path d="M0.5 1l5.5 5.5L11.5 1"/></svg><div class="c" style="left:951px;top:780px">Exposure Suits</div><div class="c" style="left:951px;top:800px;color:#2b6fd8">更多(2)<span style="display:inline-block;width:0;height:0;border-left:3.5px solid transparent;border-right:3.5px solid transparent;border-top:4.5px solid #2b8ae8;vertical-align:1px;margin-left:1px"></span></div><div class="c" style="left:1077px;top:780px">2021-01-19<br>09:43:21</div><div class="c" style="left:1204px;top:790px">anli109</div><div class="tog" style="left:1330px;top:789px"></div><div class="c" style="left:1418px;top:790px">0</div><div class="ab" style="left:1633px;top:778px;background:#219fe9"><svg width="24" height="24" viewBox="0 0 24 24" fill="none" stroke="#fff" stroke-width="1.2"><path d="M14 6.9H8.1a1.5 1.5 0 0 0-1.5 1.5v5.8a1.5 1.5 0 0 0 1.5 1.5h5.8a1.5 1.5 0 0 0 1.5-1.5v-1.6"/><path d="M10.6 13.6l.5-2.3 5.5-5.5 1.9 1.9-5.5 5.5z" stroke-width="1.1"/><path d="M11.2 11.4l1.9 1.9"/></svg></div><div class="ab" style="left:1662px;top:778px;background:#219fe9"><svg width="24" height="24" viewBox="0 0 24 24" fill="none" stroke="#fff" stroke-width="1.15"><path d="M11.3 14.6H6.6V9.3L9.3 6.6h4.9v2"/><path d="M9.3 6.6v2.7H6.6"/><path d="M11.3 10.9L14 8.2h4.5v9.4h-7.2z"/><path d="M14 8.2v2.7h-2.7"/></svg></div><div class="ab" style="left:1691px;top:778px;background:#43b54b"><svg width="24" height="24" viewBox="0 0 24 24"><path d="M6.1 11.9c1.8-2.6 4-4 6.4-4s4.6 1.4 6.4 4c-1.8 2.6-4 4-6.4 4s-4.6-1.4-6.4-4z" fill="none" stroke="#fff" stroke-width="1.1"/><circle cx="12.5" cy="11.7" r="2.6" fill="#fff"/></svg></div><div class="ab" style="left:1720px;top:778px;background:#f8b93b"><svg width="24" height="24" viewBox="0 0 24 24"><path d="M15 7.8L8.9 11.6l6.6 3.5" stroke="#fff" stroke-width="1.6" fill="none"/><circle cx="15" cy="7.8" r="2.3" fill="#fff"/><circle cx="15.5" cy="15.1" r="2.3" fill="#fff"/><circle cx="8.9" cy="11.6" r="2.4" fill="#fff"/></svg></div><div class="ab" style="left:1749px;top:778px;background:#ef5f5f"><svg width="24" height="24" viewBox="0 0 24 24" fill="none" stroke="#fff" stroke-width="1.1"><path d="M7.1 8.4h9.9"/><path d="M10.3 8.2V6.8h3.4v1.4"/><path d="M7.9 8.6l.6 8h7l.6-8"/><path d="M10.3 10.3v4.6M12 10.3v4.6M13.7 10.3v4.6"/></svg></div><div class="rev" style="left:1633px;top:810px">添加评价 (0)</div><div class="row" style="top:838px"></div><div class="cb" style="left:293px;top:870px"></div><div class="abs" style="left:345px;top:846px;width:60px;height:60px"><svg width="60" height="60" viewBox="0 0 60 60"><rect x="18.9" y="6" width="11" height="16" rx="1.5" fill="#c8c8c8"/><rect x="21.8" y="9" width="5.8" height="5" fill="#667066"/><rect x="28.3" y="5.4" width="12.3" height="11" rx="1.5" fill="#2a2a2a"/><rect x="19" y="17" width="22" height="5" fill="#d0d0d0"/><path d="M12.5 24h15v3h-15z" fill="#9a9a9a"/><rect x="27.6" y="22" width="6.5" height="7" fill="#2a2a2a"/><path d="M8 29.5h44c3 0 3.5 3 3.5 6v13c0 4-2 6-6 6H42c-4 0-7-4-10-10h-4c-3 6-6 10-10 10H10c-4 0-5-2-5-6v-13c0-3 0-6 3-6z" fill="#1f1f1f"/><path d="M16 33.5h11c1 0 1 1 1 2-1 5-3 13-8 14.5-3 .5-5-1-5.5-4l.5-11c0-1 0-1.5 1-1.5z" fill="#f6f6f6"/><path d="M33 33.5h11c1 0 1 .5 1 1.5l.5 11c-.5 3-2.5 4.5-5.5 4-5-1.5-7-9.5-8-14.5 0-1 0-2 1-2z" fill="#f6f6f6"/></svg></div><div class="c" style="left:446px;top:867px;color:#2b6fd8">WQSS-4500A</div><div class="c price" style="left:699px;top:867px">$ 0.00</div><div class="c" style="left:825px;top:867px;font-size:12px">款式</div><svg class="abs" style="left:853px;top:873px" width="11.5" height="8" viewBox="0 0 12 8" fill="none" stroke="#222" stroke-width="1.7"><path d="M0.5 1l5.5 5.5L11.5 1"/></svg><div class="c" style="left:951px;top:867px">Instruments</div><div class="c" style="left:1077px;top:857px">2021-01-19<br>09:43:21</div><div class="c" style="left:1204px;top:867px">anli109</div><div class="tog" style="left:1330px;top:866px"></div><div class="c" style="left:1418px;top:867px">0</div><div class="ab" style="left:1633px;top:855px;background:#219fe9"><svg width="24" height="24" viewBox="0 0 24 24" fill="none" stroke="#fff" stroke-width="1.2"><path d="M14 6.9H8.1a1.5 1.5 0 0 0-1.5 1.5v5.8a1.5 1.5 0 0 0 1.5 1.5h5.8a1.5 1.5 0 0 0 1.5-1.5v-1.6"/><path d="M10.6 13.6l.5-2.3 5.5-5.5 1.9 1.9-5.5 5.5z" stroke-width="1.1"/><path d="M11.2 11.4l1.9 1.9"/></svg></div><div class="ab" style="left:1662px;top:855px;background:#219fe9"><svg width="24" height="24" viewBox="0 0 24 24" fill="none" stroke="#fff" stroke-width="1.15"><path d="M11.3 14.6H6.6V9.3L9.3 6.6h4.9v2"/><path d="M9.3 6.6v2.7H6.6"/><path d="M11.3 10.9L14 8.2h4.5v9.4h-7.2z"/><path d="M14 8.2v2.7h-2.7"/></svg></div><div class="ab" style="left:1691px;top:855px;background:#43b54b"><svg width="24" height="24" viewBox="0 0 24 24"><path d="M6.1 11.9c1.8-2.6 4-4 6.4-4s4.6 1.4 6.4 4c-1.8 2.6-4 4-6.4 4s-4.6-1.4-6.4-4z" fill="none" stroke="#fff" stroke-width="1.1"/><circle cx="12.5" cy="11.7" r="2.6" fill="#fff"/></svg></div><div class="ab" style="left:1720px;top:855px;background:#f8b93b"><svg width="24" height="24" viewBox="0 0 24 24"><path d="M15 7.8L8.9 11.6l6.6 3.5" stroke="#fff" stroke-width="1.6" fill="none"/><circle cx="15" cy="7.8" r="2.3" fill="#fff"/><circle cx="15.5" cy="15.1" r="2.3" fill="#fff"/><circle cx="8.9" cy="11.6" r="2.4" fill="#fff"/></svg></div><div class="ab" style="left:1749px;top:855px;background:#ef5f5f"><svg width="24" height="24" viewBox="0 0 24 24" fill="none" stroke="#fff" stroke-width="1.1"><path d="M7.1 8.4h9.9"/><path d="M10.3 8.2V6.8h3.4v1.4"/><path d="M7.9 8.6l.6 8h7l.6-8"/><path d="M10.3 10.3v4.6M12 10.3v4.6M13.7 10.3v4.6"/></svg></div><div class="rev" style="left:1633px;top:887px">添加评价 (0)</div><div class="row" style="top:915px"></div><div class="cb" style="left:293px;top:947px"></div><div class="abs" style="left:345px;top:923px;width:60px;height:60px"><svg width="60" height="60" viewBox="0 0 60 60"><ellipse cx="29.9" cy="10.6" rx="11.9" ry="8.2" fill="#1a1a1a"/><path d="M18.2 10c3 4 20 5 23.5 1" stroke="#1e7fe8" stroke-width="1.6" fill="none"/><rect x="17.8" y="19.9" width="5.2" height="2.8" rx="1.2" fill="#f2d400"/><rect x="15.7" y="23" width="8.8" height="6.2" rx="2" fill="#222"/><path d="M15.2 29.7h4l-.5 2.6h-3.5z" fill="#333"/><ellipse cx="20.3" cy="41" rx="9" ry="8" fill="#6aa8ec"/><path d="M15 34l5 10 5-10" stroke="#1f4fb8" stroke-width="3" fill="none"/><path d="M31.2 20l4 0 4.8 5.5-3 1.5z" fill="#f2d400"/><path d="M35 25.5l9 5.5" stroke="#ddd" stroke-width="2.5"/><rect x="45.2" y="24.5" width="6.7" height="7.8" rx="1.5" fill="#222"/><path d="M37 44c0-6 4-10 12-10.5 1 4 1 8 .5 11z" fill="#2a6fe0"/><path d="M36 40c2-4 6-6 10-6" stroke="#7fb3f0" stroke-width="1.5" fill="none"/></svg></div><div class="c" style="left:446px;top:944px;color:#2b6fd8">LKMV-2310B</div><div class="c price" style="left:699px;top:944px">$ 0.00</div><div class="c" style="left:825px;top:944px;font-size:12px">款式</div><svg class="abs" style="left:853px;top:950px" width="11.5" height="8" viewBox="0 0 12 8" fill="none" stroke="#222" stroke-width="1.7"><path d="M0.5 1l5.5 5.5L11.5 1"/></svg><div class="c" style="left:951px;top:944px">Instruments</div><div class="c" style="left:1077px;top:934px">2021-01-19<br>09:43:21</div><div class="c" style="left:1204px;top:944px">anli109</div><div class="tog" style="left:1330px;top:943px"></div><div class="c" style="left:1418px;top:944px">0</div><div class="ab" style="left:1633px;top:932px;background:#219fe9"><svg width="24" height="24" viewBox="0 0 24 24" fill="none" stroke="#fff" stroke-width="1.2"><path d="M14 6.9H8.1a1.5 1.5 0 0 0-1.5 1.5v5.8a1.5 1.5 0 0 0 1.5 1.5h5.8a1.5 1.5 0 0 0 1.5-1.5v-1.6"/><path d="M10.6 13.6l.5-2.3 5.5-5.5 1.9 1.9-5.5 5.5z" stroke-width="1.1"/><path d="M11.2 11.4l1.9 1.9"/></svg></div><div class="ab" style="left:1662px;top:932px;background:#219fe9"><svg width="24" height="24" viewBox="0 0 24 24" fill="none" stroke="#fff" stroke-width="1.15"><path d="M11.3 14.6H6.6V9.3L9.3 6.6h4.9v2"/><path d="M9.3 6.6v2.7H6.6"/><path d="M11.3 10.9L14 8.2h4.5v9.4h-7.2z"/><path d="M14 8.2v2.7h-2.7"/></svg></div><div class="ab" style="left:1691px;top:932px;background:#43b54b"><svg width="24" height="24" viewBox="0 0 24 24"><path d="M6.1 11.9c1.8-2.6 4-4 6.4-4s4.6 1.4 6.4 4c-1.8 2.6-4 4-6.4 4s-4.6-1.4-6.4-4z" fill="none" stroke="#fff" stroke-width="1.1"/><circle cx="12.5" cy="11.7" r="2.6" fill="#fff"/></svg></div><div class="ab" style="left:1720px;top:932px;background:#f8b93b"><svg width="24" height="24" viewBox="0 0 24 24"><path d="M15 7.8L8.9 11.6l6.6 3.5" stroke="#fff" stroke-width="1.6" fill="none"/><circle cx="15" cy="7.8" r="2.3" fill="#fff"/><circle cx="15.5" cy="15.1" r="2.3" fill="#fff"/><circle cx="8.9" cy="11.6" r="2.4" fill="#fff"/></svg></div><div class="ab" style="left:1749px;top:932px;background:#ef5f5f"><svg width="24" height="24" viewBox="0 0 24 24" fill="none" stroke="#fff" stroke-width="1.1"><path d="M7.1 8.4h9.9"/><path d="M10.3 8.2V6.8h3.4v1.4"/><path d="M7.9 8.6l.6 8h7l.6-8"/><path d="M10.3 10.3v4.6M12 10.3v4.6M13.7 10.3v4.6"/></svg></div><div class="rev" style="left:1633px;top:964px">添加评价 (0)</div><div class="abs" style="left:114px;top:112px;width:111px;height:43px;border:3px solid #ff0000"></div><div class="abs" style="left:430px;top:389px;width:86px;height:41px;border:3px solid #ff0000"></div><svg class="abs" style="left:0;top:0" width="1915" height="967"><line x1="241" y1="152" x2="399" y2="343" stroke="#ff0000" stroke-width="3"/><path d="M394.8 345.2 L401.4 337.4 L421.8 366.6 L419.6 369.4 Z" fill="#ff0000" stroke="#ff0000" stroke-width="0.8" stroke-linejoin="round"/></svg><div class="abs" style="left:1901px;top:42px;width:14px;height:925px;background:#e8e8e8"></div><div class="abs" style="left:1901px;top:42px;width:14px;height:16px;background:#f0f0f0"></div><svg class="abs" style="left:1904px;top:47px" width="9" height="6" viewBox="0 0 9 6" fill="none" stroke="#606060" stroke-width="1"><path d="M0.5 5L4.5 1L8.5 5"/></svg><div class="abs" style="left:1901px;top:58px;width:14px;height:440px;background:#b9b9b9"></div><svg class="abs" style="left:1904px;top:956px" width="9" height="6" viewBox="0 0 9 6" fill="none" stroke="#606060" stroke-width="1"><path d="M0.5 1L4.5 5L8.5 1"/></svg><div class="abs" style="left:1906px;top:492px;width:9px;height:58px;border-radius:5px;background:#5a5a5a;border:1px solid #eee;border-right:none"></div><div class="abs" style="left:1908px;top:519px;width:6px;height:1px;background:#3cd46a"></div><div class="abs" style="left:1908px;top:521px;width:6px;height:1px;background:#3cd46a"></div><div class="abs" style="left:1908px;top:523px;width:6px;height:1px;background:#3cd46a"></div><div class="abs" style="left:1908px;top:525px;width:6px;height:1px;background:#3cd46a"></div><div class="abs" style="left:1908px;top:527px;width:6px;height:1px;background:#3cd46a"></div><div class="abs" style="left:1908px;top:529px;width:6px;height:1px;background:#3cd46a"></div><div class="abs" style="left:1908px;top:531px;width:6px;height:1px;background:#3cd46a"></div><div class="abs" style="left:1908px;top:533px;width:6px;height:1px;background:#3cd46a"></div><div class="abs" style="left:1908px;top:535px;width:6px;height:1px;background:#3cd46a"></div><div class="abs" style="left:1908px;top:537px;width:6px;height:1px;background:#3cd46a"></div><div class="abs" style="left:1908px;top:539px;width:6px;height:1px;background:#3cd46a"></div><div class="abs" style="left:1908px;top:541px;width:6px;height:1px;background:#3cd46a"></div><div class="abs" style="left:1908px;top:543px;width:6px;height:1px;background:#3cd46a"></div><div class="abs" style="left:1908px;top:545px;width:6px;height:1px;background:#3cd46a"></div><div class="abs" style="left:1908px;top:547px;width:6px;height:1px;background:#3cd46a"></div></body></html>
